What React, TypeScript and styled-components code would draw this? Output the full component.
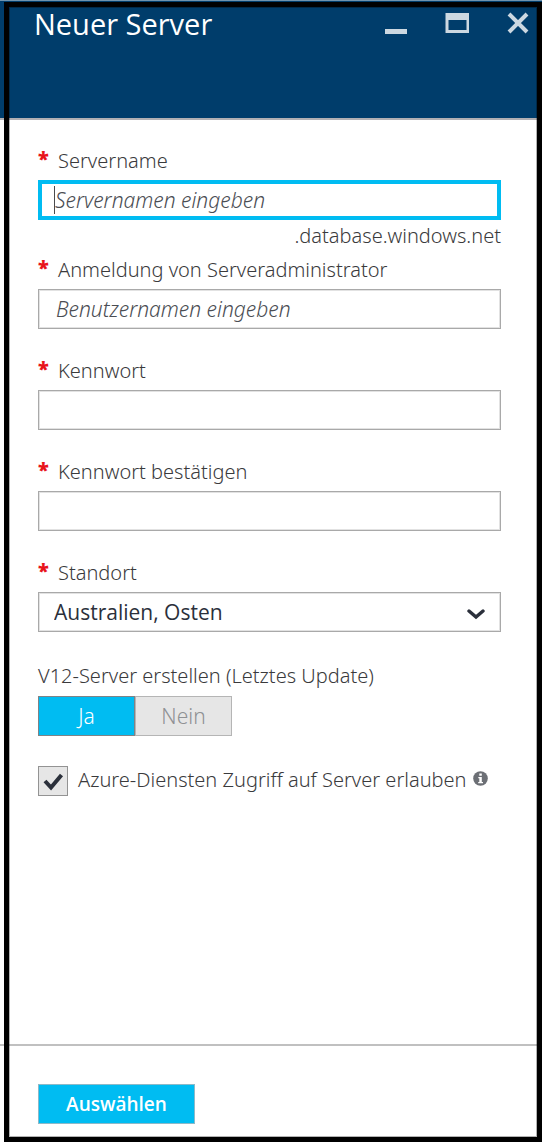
import React, { useState } from "react";
import styled, { createGlobalStyle } from "styled-components";

const GlobalStyle = createGlobalStyle`
  *, *::before, *::after { box-sizing: border-box; }
  body {
    margin: 0;
    background: #fff;
    color: #3a3a3c;
    font: 300 20px/28px "Noto Sans", "Open Sans", sans-serif;
  }
  input, select, button { font: inherit; color: inherit; border-radius: 0; }
`;

const Blade = styled.div`
  position: relative;
  display: flex;
  flex-direction: column;
  min-height: 100vh;
  border-top: 1px solid #6f93ad;
`;

const Frame = styled.div`
  position: absolute;
  inset: 1px 0 0 4px;
  border: 5px solid #000;
  box-shadow: inset 0 0 0 1px rgba(0, 0, 0, 0.3);
  pointer-events: none;
`;

const Header = styled.header`
  display: flex;
  justify-content: space-between;
  align-items: flex-start;
  height: 119px;
  padding: 5px 12px 0 34px;
  background: #003d6b;
  border-bottom: 2px solid #b2b0b3;
`;

const Title = styled.h1`
  margin: 0;
  color: #fff;
  font-family: "Open Sans", "Noto Sans", sans-serif;
  font-size: 29px;
  line-height: 36px;
  font-weight: 400;
`;

const WindowButtons = styled.div`
  display: flex;
  gap: 37px;
  padding-top: 5px;
`;

const WindowButton = styled.button`
  display: flex;
  padding: 0;
  border: 0;
  background: none;
  cursor: pointer;
`;

const Form = styled.form`
  display: flex;
  flex: 1;
  flex-direction: column;
`;

const Body = styled.div`
  display: flex;
  flex: 1;
  flex-direction: column;
  gap: 30px;
  padding: 27px 41px 28px 38px;
`;

const Fields = styled.div`
  display: flex;
  flex-direction: column;
  gap: 28px;
`;

const Field = styled.div`
  display: flex;
  flex-direction: column;
  gap: 5px;
`;

const Label = styled.label`
  display: flex;
`;

const Star = styled.span`
  width: 20px;
  color: #e8141c;
  font-family: "Open Sans", "Noto Sans", sans-serif;
  font-size: 20px;
  line-height: 24px;
  font-weight: 800;
`;

const Control = styled.div`
  position: relative;
  display: flex;
`;

const TextInput = styled.input<{ $active?: boolean }>`
  width: 100%;
  height: 40px;
  padding: 0 ${(p) => (p.$active ? 13 : 17)}px;
  border: ${(p) => (p.$active ? "4px solid #00bcf2" : "1px solid #a9a9a9")};
  box-shadow: ${(p) => (p.$active ? "none" : "inset 0 0 0 1px #e2e2e2")};
  background: #fff;
  font-size: 21px;
  outline: none;
  &::placeholder {
    color: #4a4d53;
    font-style: italic;
    opacity: 1;
  }
`;

const Caret = styled.span`
  position: absolute;
  left: 16px;
  top: 6px;
  width: 1px;
  height: 28px;
  background: #4a4a4c;
`;

const Suffix = styled.div`
  text-align: right;
  margin-top: -3px;
  margin-bottom: -22px;
`;

const Select = styled.select`
  appearance: none;
  width: 100%;
  height: 40px;
  padding: 0 40px 0 15px;
  border: 1px solid #a9a9a9;
  box-shadow: inset 0 0 0 1px #e2e2e2;
  background: #fff;
  color: #2b303b;
  font-family: "Open Sans", "Noto Sans", sans-serif;
  font-size: 21px;
  font-weight: 400;
`;

const Chevron = styled.svg`
  position: absolute;
  right: 16px;
  top: 17px;
  pointer-events: none;
`;

const Group = styled.fieldset`
  margin: 0;
  padding: 0;
  border: 0;
`;

const Legend = styled.legend`
  padding: 0;
  margin-bottom: 6px;
`;

const Toggle = styled.div`
  display: flex;
`;

const Choice = styled.label<{ $on: boolean }>`
  position: relative;
  width: 97px;
  height: 40px;
  font-size: 21px;
  line-height: 38px;
  text-align: center;
  border: 1px solid ${(p) => (p.$on ? "#7f8386" : "#b5b5b5")};
  background: ${(p) => (p.$on ? "#00bcf2" : "#e6e6e6")};
  color: ${(p) => (p.$on ? "#fff" : "#8f9194")};
`;

const HiddenRadio = styled.input`
  position: absolute;
  inset: 0;
  margin: 0;
  opacity: 0;
`;

const CheckRow = styled.div`
  display: flex;
  align-items: flex-start;
`;

const CheckWrap = styled.span`
  position: relative;
  display: flex;
  margin-right: 10px;
`;

const CheckBox = styled.input`
  appearance: none;
  width: 30px;
  height: 30px;
  margin: 0;
  border: 1px solid #939393;
  background: #e6e6e6;
  & + svg { display: none; }
  &:checked + svg { display: block; }
`;

const Tick = styled.svg`
  position: absolute;
  left: 5px;
  top: 6px;
  pointer-events: none;
`;

const InfoIcon = styled.svg`
  margin: 5px 0 0 6px;
  flex: none;
`;

const Footer = styled.footer`
  padding: 38px 41px 18px 38px;
  border-top: 2px solid #c0c0c0;
`;

const Submit = styled.button`
  width: 157px;
  height: 40px;
  padding: 0;
  border: 1px solid #8cb9c8;
  background: #00bcf2;
  color: #fff;
  font-family: "Open Sans", "Noto Sans", sans-serif;
  font-size: 19px;
  font-weight: 600;
`;

function Required({ id, text }: { id: string; text: string }) {
  return (
    <Label htmlFor={id}>
      <Star aria-hidden="true">*</Star>
      {text}
    </Label>
  );
}

export default function App() {
  const [v12, setV12] = useState(true);
  return (
    <>
      <GlobalStyle />
      <Blade>
        <Header>
          <Title>Neuer Server</Title>
          <WindowButtons>
            <WindowButton type="button" aria-label="Minimieren">
              <svg width="24" height="24" viewBox="0 0 24 24">
                <path d="M1 18H23V23H1Z" fill="#ccd8e1" />
              </svg>
            </WindowButton>
            <WindowButton type="button" aria-label="Maximieren">
              <svg width="24" height="24" viewBox="0 0 24 24">
                <path fillRule="evenodd" d="M0.500 2H24V22H0.500ZM3.500 9V19H21.500V9Z" fill="#ccd8e1" />
              </svg>
            </WindowButton>
            <WindowButton type="button" aria-label="Schließen">
              <svg width="24" height="24" viewBox="0 0 24 24">
                <path d="M3 3L21 21M21 3L3 21" stroke="#ccd8e1" strokeWidth="4" />
              </svg>
            </WindowButton>
          </WindowButtons>
        </Header>
        <Form onSubmit={(e) => e.preventDefault()}>
          <Body>
            <Fields>
              <Field>
                <Required id="server" text="Servername" />
                <Control>
                  <TextInput id="server" $active placeholder="Servernamen eingeben" />
                  <Caret />
                </Control>
                <Suffix>.database.windows.net</Suffix>
              </Field>
              <Field>
                <Required id="admin" text="Anmeldung von Serveradministrator" />
                <TextInput id="admin" placeholder="Benutzernamen eingeben" />
              </Field>
              <Field>
                <Required id="password" text="Kennwort" />
                <TextInput id="password" type="password" />
              </Field>
              <Field>
                <Required id="confirm" text="Kennwort bestätigen" />
                <TextInput id="confirm" type="password" />
              </Field>
              <Field>
                <Required id="location" text="Standort" />
                <Control>
                  <Select id="location">
                    <option>Australien, Osten</option>
                  </Select>
                  <Chevron width="18" height="11" viewBox="0 0 18 11" fill="none">
                    <path d="M2 2L9 8L16 2" stroke="#2b303b" strokeWidth="3.400" strokeLinecap="round" />
                  </Chevron>
                </Control>
              </Field>
            </Fields>
            <Group>
              <Legend>V12-Server erstellen (Letztes Update)</Legend>
              <Toggle>
                <Choice $on={v12}>
                  <HiddenRadio type="radio" name="v12" checked={v12} onChange={() => setV12(true)} />
                  Ja
                </Choice>
                <Choice $on={!v12}>
                  <HiddenRadio type="radio" name="v12" checked={!v12} onChange={() => setV12(false)} />
                  Nein
                </Choice>
              </Toggle>
            </Group>
            <CheckRow>
              <CheckWrap>
                <CheckBox id="azure" type="checkbox" defaultChecked />
                <Tick width="21" height="19" viewBox="0 0 21 19" fill="none">
                  <path d="M2 9L8 15.500L18.500 3" stroke="#2b303b" strokeWidth="4" />
                </Tick>
              </CheckWrap>
              <label htmlFor="azure">Azure-Diensten Zugriff auf Server erlauben</label>
              <InfoIcon width="15" height="15" viewBox="0 0 15 15">
                <circle cx="7.500" cy="7.500" r="7.300" fill="#6c6f75" />
                <path d="M6.300 2.500H8.800V4.700H6.300ZM5.300 6H8.800V11H10V12.300H5.200V11H6.300V7.200H5.300Z" fill="#fff" />
              </InfoIcon>
            </CheckRow>
          </Body>
          <Footer>
            <Submit type="submit">Auswählen</Submit>
          </Footer>
        </Form>
        <Frame />
      </Blade>
    </>
  );
}
